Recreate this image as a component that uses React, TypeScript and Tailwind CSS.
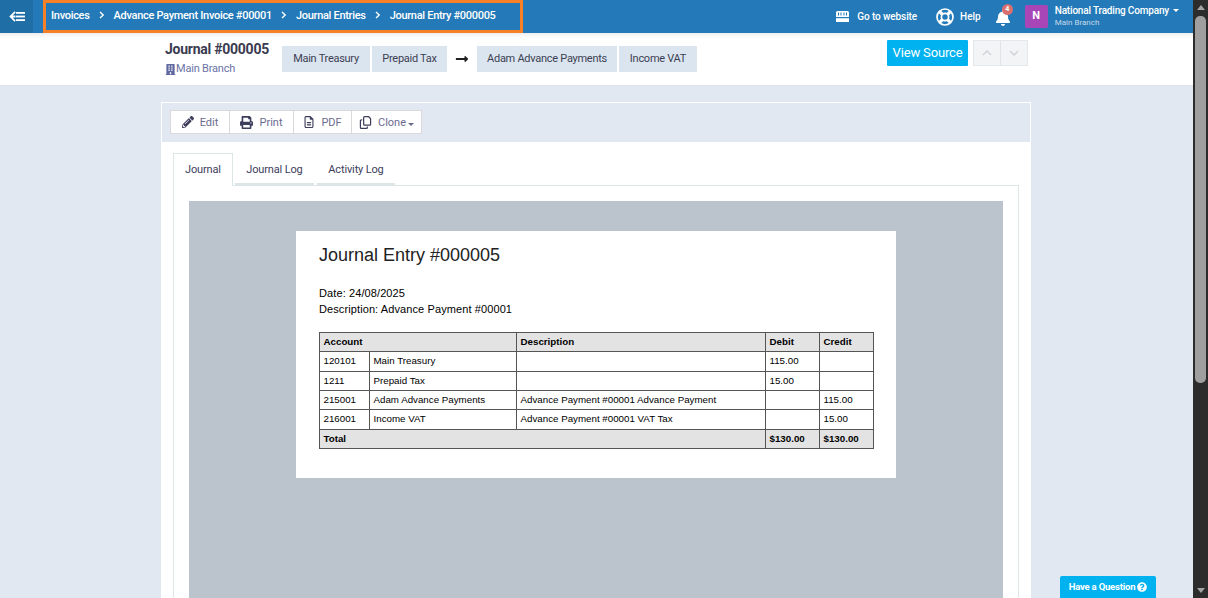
import React from "react";
import { FaPencilAlt, FaPrint, FaBuilding, FaBell, FaQuestionCircle, FaLongArrowAltRight } from "react-icons/fa";
import { FaRegFileLines, FaRegCopy } from "react-icons/fa6";

const Crumb = ({ children }: { children: React.ReactNode }) => (
  <span className="text-white text-[11px] font-medium tracking-[-0.3px] leading-none whitespace-nowrap">{children}</span>
);
const Sep = () => (
  <svg width="6" height="8" viewBox="0 0 6 8" className="mx-[9px] shrink-0" fill="none" stroke="#fff" strokeWidth="1.4"><path d="M1 1l3.2 3L1 7" /></svg>
);
const Chip = ({ children, w }: { children: React.ReactNode; w: string }) => (
  <div className={`h-[26px] flex items-center justify-center bg-[#dbe5f0] text-[#3b3f52] text-[11px] tracking-[-0.27px] whitespace-nowrap ${w}`}>{children}</div>
);
const ToolBtn = ({ icon, label, w, caret }: { icon: React.ReactNode; label: string; w: string; caret?: boolean }) => (
  <div className={`h-[24px] pt-[2px] bg-white border border-[#d9d9d9] flex items-center justify-center gap-[6px] text-[#6b6b8f] text-[11px] -ml-px first:ml-0 ${w}`}>
    <span className="text-[#3d3d5c] flex -mt-[2px]">{icon}</span>
    <span>{label}</span>
    {caret && <span className="-ml-[4px] w-0 h-0 border-x-[3px] border-x-transparent border-t-[3px] border-t-[#6b6b8f] mt-[2px]" />}
  </div>
);

const rows = [
  ["120101", "Main Treasury", "", "115.00", "", "h-[20px]"],
  ["1211", "Prepaid Tax", "", "15.00", "", "h-[19px]"],
  ["215001", "Adam Advance Payments", "Advance Payment #00001 Advance Payment", "", "115.00", "h-[19px]"],
  ["216001", "Income VAT", "Advance Payment #00001 VAT Tax", "", "15.00", "h-[20px]"],
];
const cell = "border border-[#555] px-[3.5px] py-0 align-middle";

export default function App() {
  return (
    <div className="w-[1208px] h-[598px] flex overflow-hidden relative font-['Roboto',sans-serif]">
      <div className="w-[1193px] h-[598px] flex flex-col bg-[#e2e8f1]">
        {/* top bar */}
        <header className="h-[33px] shrink-0 flex items-stretch bg-[#247ab8]">
          <div className="w-[33px] flex items-center justify-center bg-[#1f6ea6]">
            <svg width="16" height="11" viewBox="0 0 16 11" fill="#fff"><path d="M5.5 0.3l1.2 1.2L3.6 4.5H6V6.5H3.6l3.1 3-1.2 1.2L0.3 5.5z" /><rect x="7" y="1" width="9" height="1.8" /><rect x="6.5" y="4.6" width="9.5" height="1.8" /><rect x="7" y="8.2" width="9" height="1.8" /></svg>
          </div>
          <div className="ml-[10px] w-[480px] shrink-0 border-[3px] border-[#f58025] flex items-center pl-[5px] pb-[3px]">
            <Crumb>Invoices</Crumb><Sep />
            <Crumb>Advance Payment Invoice #00001</Crumb><Sep />
            <Crumb>Journal Entries</Crumb><Sep />
            <Crumb>Journal Entry #000005</Crumb>
          </div>
          <div className="flex-1 flex items-center justify-end pr-[14px] text-white">
            <svg width="13" height="11" viewBox="0 0 13 11" fill="#fff">
              <path d="M1.5 0h10A1.5 1.5 0 0 1 13 1.5V6H0V1.5A1.5 1.5 0 0 1 1.5 0z" />
              <path d="M2.5 1.5v3M5 1.5v3M8 1.5v3M10.5 1.5v3" stroke="#247ab8" strokeWidth="1" />
              <path d="M0 7.2h13V11H0z" />
            </svg>
            <span className="ml-[8px] text-[10px] font-medium tracking-[-0.1px] whitespace-nowrap">Go to website</span>
            <svg width="18" height="18" viewBox="0 0 18 18" fill="none" stroke="#fff" className="ml-[19px]">
              <circle cx="9" cy="9" r="8" strokeWidth="1.7" />
              <circle cx="9" cy="9" r="3.6" strokeWidth="1.7" />
              <path d="M3.4 3.4l3 3M14.6 3.4l-3 3M3.4 14.6l3-3M14.6 14.6l-3-3" strokeWidth="3.4" />
            </svg>
            <span className="ml-[6px] text-[10px] font-medium">Help</span>
            <div className="relative ml-[14px] mt-[3px]">
              <FaBell size={16} />
              <span className="absolute -top-[6px] left-[7px] w-[11px] h-[11px] rounded-full bg-[#d9706f] text-white text-[7px] font-bold flex items-center justify-center">4</span>
            </div>
            <div className="ml-[14px] w-[23px] h-[23px] rounded-[2px] bg-[#a846b8] flex items-center justify-center text-[11px] font-bold">N</div>
            <div className="ml-[7px] flex flex-col justify-center -mt-px">
              <div className="flex items-center text-[10px] tracking-[-0.18px] font-medium leading-[13px] whitespace-nowrap">National Trading Company<span className="ml-[4px] w-0 h-0 border-x-[3px] border-x-transparent border-t-[3px] border-t-white" /></div>
              <div className="text-[8px] leading-[11px] text-[#c3d9ea]">Main Branch</div>
            </div>
          </div>
        </header>

        {/* page head */}
        <div className="h-[53px] shrink-0 bg-white border-b border-[#dde3ea] shadow-[inset_0_6px_6px_-6px_rgba(0,0,0,0.15)] flex items-start pl-[165px] pr-[165px]">
          <div className="w-[117px] pt-[8px]">
            <div className="text-[14px] font-bold text-[#3a3a50] tracking-[-0.25px] leading-[17px] whitespace-nowrap">Journal #000005</div>
            <div className="mt-[4px] flex items-center text-[11px] tracking-[-0.2px] text-[#6b74a5] leading-[14px] whitespace-nowrap"><FaBuilding size={11} className="text-[#5f68a0]" />Main Branch</div>
          </div>
          <div className="flex items-center gap-[2px] mt-[13px]">
            <Chip w="w-[88px]">Main Treasury</Chip>
            <Chip w="w-[75px]">Prepaid Tax</Chip>
            <div className="w-[26px] flex justify-center text-[#222]"><FaLongArrowAltRight size={14} /></div>
            <Chip w="w-[140px]">Adam Advance Payments</Chip>
            <Chip w="w-[78px]">Income VAT</Chip>
          </div>
          <div className="flex-1" />
          <div className="mt-[7px] flex items-start">
            <div className="w-[81px] h-[26px] rounded-[1px] bg-[#00b2f0] text-white text-[13px] tracking-[-0.15px] flex items-center justify-center whitespace-nowrap">View Source</div>
            <div className="ml-[5px] flex h-[26px] bg-[#f2f4f5] border border-[#e4e8ea]">
              <div className="w-[27px] flex items-center justify-center border-r border-[#e0e4e6]">
                <svg width="10" height="6" viewBox="0 0 10 6" fill="none" stroke="#d3d6d9" strokeWidth="1.6"><path d="M1 5l4-4 4 4" /></svg>
              </div>
              <div className="w-[26px] flex items-center justify-center">
                <svg width="10" height="6" viewBox="0 0 10 6" fill="none" stroke="#d3d6d9" strokeWidth="1.6"><path d="M1 1l4 4 4-4" /></svg>
              </div>
            </div>
          </div>
        </div>

        {/* card */}
        <div className="flex-1 min-h-0 overflow-hidden pt-[16px] pl-[161px]">
          <div className="w-[870px] h-[600px] bg-white border border-white border-b-0">
            <div className="h-[39px] bg-[#e2e8f1] flex items-center pl-[8px] pb-[1px]">
              <ToolBtn icon={<FaPencilAlt size={12} />} label="Edit" w="w-[60px]" />
              <ToolBtn icon={<FaPrint size={13} />} label="Print" w="w-[65px]" />
              <ToolBtn icon={<FaRegFileLines size={12} />} label="PDF" w="w-[59px]" />
              <ToolBtn icon={<FaRegCopy size={13} />} label="Clone" w="w-[71px]" caret />
            </div>
            <div className="pl-[11px] pr-[11px] pt-[11px]">
              <div className="flex h-[33px] text-[11px] tracking-[-0.15px]">
                <div className="w-[60px] h-[33px] bg-white border border-[#dde6e6] border-b-0 flex items-center justify-center text-[#3d3d5c] relative z-10">Journal</div>
                <div className="w-[79px] ml-[2px] h-[32px] pt-[4px] border-b-2 border-[#dde6e6] flex items-center justify-center text-[#3d3d5c]">Journal Log</div>
                <div className="w-[78px] ml-[3px] h-[32px] pt-[4px] border-b-2 border-[#dde6e6] flex items-center justify-center text-[#3d3d5c]">Activity Log</div>
              </div>
              <div className="-mt-px border border-[#dde6e6] h-[500px] pl-[15px] pr-[15px] pt-[15px]">
                <div className="h-[500px] bg-[#bbc3cd] pt-[30px] flex justify-center">
                  <div className="w-[600px] h-[247px] bg-white pl-[23px] pr-[22px] pt-[12px] text-black font-['Liberation_Sans',Arial,sans-serif]">
                    <div className="text-[18px] leading-[24px] text-[#222]">Journal Entry #000005</div>
                    <div className="mt-[18px] text-[11px] leading-[16px] font-normal tracking-[0.1px]">
                      <div>Date: 24/08/2025</div>
                      <div>Description: Advance Payment #00001</div>
                    </div>
                    <table className="mt-[15px] w-[555px] border-collapse table-fixed text-[9.75px]">
                      <colgroup>
                        <col className="w-[50px]" /><col className="w-[147px]" /><col className="w-[249px]" /><col className="w-[54px]" /><col className="w-[54px]" />
                      </colgroup>
                      <tbody>
                        <tr className="h-[19px] bg-[#e3e3e3] font-bold">
                          <td className={cell} colSpan={2}>Account</td>
                          <td className={cell}>Description</td>
                          <td className={cell}>Debit</td>
                          <td className={cell}>Credit</td>
                        </tr>
                        {rows.map((r) => (
                          <tr key={r[0]} className={r[5]}>
                            <td className={cell}>{r[0]}</td>
                            <td className={cell}>{r[1]}</td>
                            <td className={cell}>{r[2]}</td>
                            <td className={cell}>{r[3]}</td>
                            <td className={cell}>{r[4]}</td>
                          </tr>
                        ))}
                        <tr className="h-[19px] bg-[#e3e3e3] font-bold">
                          <td className={cell} colSpan={3}>Total</td>
                          <td className={cell}>$130.00</td>
                          <td className={cell}>$130.00</td>
                        </tr>
                      </tbody>
                    </table>
                  </div>
                </div>
              </div>
            </div>
          </div>
        </div>
      </div>

      {/* scrollbar */}
      <div className="w-[15px] h-[598px] bg-[#2c2c2c] flex flex-col items-center">
        <div className="mt-[5px] w-0 h-0 border-x-[4px] border-x-transparent border-b-[5px] border-b-[#a3a3a3]" />
        <div className="mt-[6px] w-[11px] h-[367px] rounded-[5px] bg-[#9f9f9f]" />
        <div className="flex-1" />
        <div className="mb-[5px] w-0 h-0 border-x-[4px] border-x-transparent border-t-[5px] border-t-[#a3a3a3]" />
      </div>

      {/* floating */}
      <div className="absolute left-[1060px] top-[576px] w-[96px] h-[22px] rounded-t-[2px] bg-[#00b2f0] text-white text-[9.5px] font-bold tracking-[-0.2px] flex items-center justify-center gap-[2px] whitespace-nowrap">
        Have a Question <FaQuestionCircle size={10} />
      </div>
    </div>
  );
}
